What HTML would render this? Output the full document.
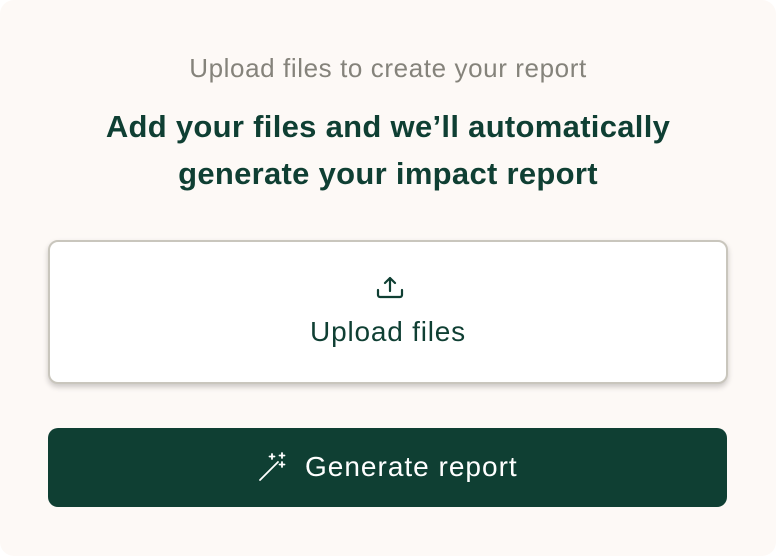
<!DOCTYPE html>
<html><head><style>
html,body{margin:0;padding:0;width:776px;height:556px;background:#fff;overflow:hidden}
.page{position:absolute;left:0;top:0;width:776px;height:556px;background:#fdf9f6;border-radius:14px;font-family:"Liberation Sans",sans-serif}
.sub{position:absolute;top:53px;width:100%;text-align:center;color:#85837b;font-size:26px;letter-spacing:0.6px}
.h{position:absolute;top:103px;width:100%;text-align:center;color:#0f3f33;font-size:31px;font-weight:bold;line-height:47px;letter-spacing:0.3px}
.card{position:absolute;left:48px;top:240px;width:676px;height:140px;background:#fff;border:2px solid #c9c6bd;border-radius:10px;box-shadow:0 3px 6px rgba(0,0,0,0.2)}
.card .t{position:absolute;top:74px;width:100%;text-align:center;color:#0f3f33;font-size:28px;letter-spacing:0.8px}
.card svg{position:absolute;left:326px;top:32px}
.btn{position:absolute;left:48px;top:428px;width:679px;height:79px;background:#0f3f33;border-radius:10px;color:#fff;font-size:28px;letter-spacing:1px}
.btn .t{position:absolute;left:257px;top:23px}
.btn svg{position:absolute;left:210px;top:22px}
</style></head><body><div class="page">
<div class="sub">Upload files to create your report</div>
<div class="h">Add your files and we’ll automatically<br>generate your impact report</div>
<div class="card">
<svg width="28" height="28" viewBox="0 0 28 28" fill="none" stroke="#0f3f33" stroke-width="2.2" stroke-linecap="round" stroke-linejoin="round"><path d="M14 4v13M9 9l5-5 5 5M2 16v5a2 2 0 0 0 2 2h20a2 2 0 0 0 2-2v-5"/></svg>
<div class="t">Upload files</div></div>
<div class="btn">
<svg width="34" height="34" viewBox="0 0 34 34" fill="none" stroke="#fff" stroke-width="1.8" stroke-linecap="round"><path d="M2 30L20 12M14 4v5M11.5 6.5h5M24 3v5M21.5 5.5h5M24 12v5M21.5 14.5h5"/></svg>
<div class="t">Generate report</div></div>
</div></body></html>
